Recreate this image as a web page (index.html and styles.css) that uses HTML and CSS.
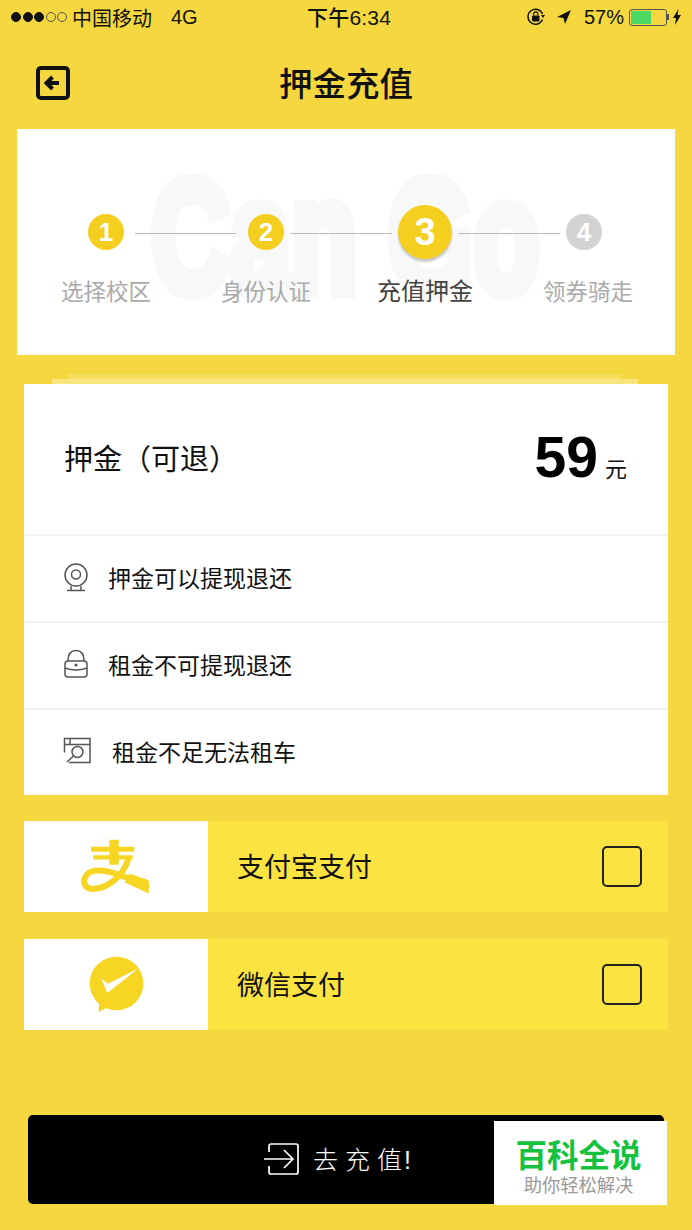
FILE: index.html
```html
<!DOCTYPE html>
<html lang="zh-CN">
<head>
<meta charset="UTF-8" />
<meta name="viewport" content="width=device-width, initial-scale=1" />
<title>押金充值</title>
<link rel="stylesheet" href="styles.css">
</head>
<body>
  <div class="page">
    <div class="status-bar">
      <div class="status-left">
        <div class="signal">
          <span class="dot"></span><span class="dot"></span><span class="dot"></span>
          <span class="dot off"></span><span class="dot off"></span>
        </div>
        <span class="carrier">中国移动</span>
        <span class="network">4G</span>
      </div>
      <div class="status-time">下午6:34</div>
      <div class="status-right">
        <svg class="ico-lock" viewBox="0 0 20 20" width="20" height="20">
          <path d="M16.5 12.5A7.5 7.5 0 1 1 16.5 7" fill="none" stroke="#111" stroke-width="1.4"/>
          <path d="M15 8h4l-2 3z" fill="#111"/>
          <rect x="6" y="8.5" width="7.5" height="6" rx="1" fill="#111"/>
          <path d="M7.6 8.5V7a2.1 2.1 0 0 1 4.2 0v1.5" fill="none" stroke="#111" stroke-width="1.2"/>
        </svg>
        <svg class="ico-loc" viewBox="0 0 16 16" width="16" height="16">
          <path d="M15 1L1 8l6.5 1L9 15z" fill="#111"/>
        </svg>
        <span class="battery-pct">57%</span>
        <div class="battery"><div class="battery-fill"></div></div>
        <span class="battery-cap"></span>
        <svg class="ico-bolt" viewBox="0 0 8 16" width="8" height="16">
          <path d="M5.5 0L0 9h3l-1 7 6-10H4.6z" fill="#111"/>
        </svg>
      </div>
    </div>

    <div class="nav">
      <svg class="back" viewBox="0 0 34 34" width="34" height="34">
        <rect x="2" y="2" width="30" height="30" rx="3" fill="none" stroke="#111" stroke-width="4"/>
        <path d="M23 17H11M16.500 11L10.500 17l6 6" fill="none" stroke="#111" stroke-width="4"/>
      </svg>
      <h1 class="nav-title">押金充值</h1>
    </div>

    <div class="steps-card">
      <div class="watermark">Can Go</div>
      <div class="steps-track">
        <div class="step-dot">1</div>
        <div class="step-line first"></div>
        <div class="step-dot">2</div>
        <div class="step-line"></div>
        <div class="step-dot active">3</div>
        <div class="step-line"></div>
        <div class="step-dot todo">4</div>
      </div>
      <div class="steps-labels">
        <div class="step-label">选择校区</div>
        <div class="step-label">身份认证</div>
        <div class="step-label current">充值押金</div>
        <div class="step-label">领券骑走</div>
      </div>
    </div>

    <div class="stack-edge outer"></div>
    <div class="stack-edge inner"></div>
    <div class="deposit-card">
      <div class="deposit-head">
        <span class="deposit-name">押金（可退）</span>
        <span class="deposit-amount"><b>59</b><i>元</i></span>
      </div>
      <div class="rule-row">
        <svg class="rule-icon" viewBox="0 0 26 30" width="26" height="30">
          <circle cx="13" cy="13" r="11" fill="none" stroke="#555" stroke-width="1.5"/>
          <circle cx="13" cy="12.5" r="4.5" fill="none" stroke="#555" stroke-width="1.5"/>
          <path d="M8 24v4M18 24v4M4 28.500h18" fill="none" stroke="#555" stroke-width="1.5"/>
        </svg>
        <span>押金可以提现退还</span>
      </div>
      <div class="rule-row">
        <svg class="rule-icon" viewBox="0 0 26 30" width="26" height="30">
          <path d="M5 12C5 5 8 1.500 13 1.500s8 3.500 8 10.500" fill="none" stroke="#555" stroke-width="1.5"/>
          <path d="M2 15a3 3 0 0 1 3-3h16a3 3 0 0 1 3 3v10a3 3 0 0 1-3 3H5a3 3 0 0 1-3-3z" fill="none" stroke="#555" stroke-width="1.500"/>
          <path d="M2 19c7 2.500 15 2.500 22 0" fill="none" stroke="#555" stroke-width="1.5"/>
          <circle cx="13" cy="16" r="1.600" fill="#555"/>
        </svg>
        <span>租金不可提现退还</span>
      </div>
      <div class="rule-row wide">
        <svg class="rule-icon" viewBox="0 0 28 28" width="28" height="28">
          <path d="M6 25.500h21V1.500H1.500v14M1.500 7.500h25M7 1.500v6" fill="none" stroke="#555" stroke-width="1.5"/>
          <circle cx="14.500" cy="15" r="5.500" fill="none" stroke="#555" stroke-width="1.5"/>
          <path d="M10.500 19L4 25" fill="none" stroke="#555" stroke-width="1.5"/>
        </svg>
        <span>租金不足无法租车</span>
      </div>
    </div>

    <div class="pay-row">
      <div class="pay-logo">
        <svg viewBox="185 60 210 170" width="70" height="57">
          <path d="M215 86h130v15H215zM222 111h118v13H222zM270 65h28v75h-28z" fill="#f6d523"/>
          <path d="M328 118C316 165 275 208 225 212C196 214 186 190 202 170C225 142 290 160 388 208" fill="none" stroke="#f6d523" stroke-width="18"/>
          <path d="M330 166L388 186V226L316 192z" fill="#f6d523"/>
        </svg>
      </div>
      <div class="pay-body">
        <span class="pay-name">支付宝支付</span>
        <span class="checkbox"></span>
      </div>
    </div>
    <div class="pay-row">
      <div class="pay-logo">
        <svg viewBox="205 420 170 172" width="57" height="57">
          <circle cx="290" cy="503" r="81" fill="#f6d523"/>
          <path d="M238 565L236 590L268 572z" fill="#f6d523"/>
          <path d="M244 488L264 504L356 458L262 532z" fill="#fff"/>
        </svg>
      </div>
      <div class="pay-body">
        <span class="pay-name">微信支付</span>
        <span class="checkbox"></span>
      </div>
    </div>

    <div class="submit">
      <svg class="submit-icon" viewBox="0 0 36 32" width="36" height="32">
        <path d="M5 9V3a2 2 0 0 1 2-2h25a2 2 0 0 1 2 2v26a2 2 0 0 1-2 2H7a2 2 0 0 1-2-2v-6" fill="none" stroke="#fff" stroke-width="1.7"/>
        <path d="M0 16h28M20 7l9 9-9 9" fill="none" stroke="#fff" stroke-width="1.7"/>
      </svg>
      <span class="submit-text">去充值<span class="bang">!</span></span>
    </div>

    <div class="brand">
      <div class="brand-name">百科全说</div>
      <div class="brand-sub">助你轻松解决</div>
    </div>
  </div>
</body>
</html>
```

FILE: styles.css
```css
* {
  box-sizing: border-box;
}

body {
  margin: 0;
  background: #f5d83f;
  font-family: "Liberation Sans", "Noto Sans CJK SC", sans-serif;
  color: #111;
}

.page {
  position: relative;
  width: 692px;
  height: 1230px;
  overflow: hidden;
}

/* status bar */
.status-bar {
  display: flex;
  align-items: center;
  justify-content: space-between;
  height: 36px;
  padding: 0 11px 2px;
  font-size: 20px;
  position: relative;
}

.status-left,
.status-right {
  display: flex;
  align-items: center;
}

.signal {
  display: flex;
  gap: 1.5px;
  margin-right: 5px;
}

.dot {
  width: 10px;
  height: 10px;
  border-radius: 50%;
  background: #111;
  border: 1px solid #111;
}

.dot.off {
  background: none;
  border-color: #555;
}

.carrier {
  font-size: 20px;
}

.network {
  margin-left: 19px;
  font-size: 20px;
}

.status-time {
  position: absolute;
  left: 307px;
  top: 1px;
  font-size: 21px;
  font-weight: 500;
  letter-spacing: 0.2px;
}

.ico-lock {
  margin-right: 10px;
}

.ico-loc {
  margin-right: 12px;
}

.battery-pct {
  margin-right: 5px;
}

.battery {
  width: 38px;
  height: 17px;
  border: 1px solid #555;
  border-radius: 3px;
  padding: 1px;
}

.battery-fill {
  width: 58%;
  height: 100%;
  background: #4cd964;
}

.battery-cap {
  width: 2px;
  height: 6px;
  margin-right: 4px;
  background: #555;
}

/* nav */
.nav {
  display: flex;
  align-items: center;
  justify-content: center;
  height: 93px;
  padding-bottom: 2px;
  position: relative;
}

.back {
  position: absolute;
  left: 36px;
  top: 30px;
}

.nav-title {
  margin: 0;
  font-size: 33.500px;
  font-weight: 500;
}

/* steps */
.steps-card {
  position: relative;
  height: 226px;
  margin: 0 17px;
  padding-top: 76px;
  background: #fff;
  overflow: hidden;
}

.watermark {
  position: absolute;
  left: 134px;
  top: 26px;
  font-size: 162px;
  line-height: 1;
  font-weight: 700;
  color: #f8f8f8;
  white-space: nowrap;
  -webkit-text-stroke: 13px #f8f8f8;
  transform: scaleX(0.675);
  transform-origin: left top;
}

.steps-track {
  position: relative;
  display: flex;
  align-items: center;
  height: 54px;
  padding-left: 71px;
}

.step-dot {
  flex: none;
  width: 36px;
  height: 36px;
  border-radius: 50%;
  background: #f5cf1f;
  color: #fff;
  font-size: 26px;
  font-weight: 700;
  line-height: 36px;
  text-align: center;
}

.step-dot.active {
  width: 54px;
  height: 54px;
  font-size: 38px;
  line-height: 54px;
  box-shadow: 0 3px 2px #c9c9c9;
}

.step-dot.todo {
  background: #d2d2d2;
}

.step-line {
  flex: none;
  width: 102px;
  height: 1px;
  margin: 2px 6px 0;
  background: #bbb;
}

.step-line.first {
  width: 101px;
  margin: 2px 12px 0 11px;
}

.steps-labels {
  position: relative;
  display: grid;
  grid-template-columns: 160px 160px 158px 168px;
  align-items: center;
  height: 34px;
  margin-top: 13px;
  padding-left: 9px;
}

.step-label {
  font-size: 22.500px;
  text-align: center;
  color: #aaa;
  white-space: nowrap;
}

.step-label.current {
  font-size: 24px;
  color: #444;
}

/* deposit card */
.stack-edge {
  height: 5px;
}

.stack-edge.outer {
  margin: 19px 70px 0 67px;
  background: #f7df5e;
}

.stack-edge.inner {
  margin: 0 54px 0 52px;
  background: #f9e57e;
}

.deposit-card {
  margin: 0 24px;
  background: #fff;
}

.deposit-head {
  display: flex;
  align-items: center;
  justify-content: space-between;
  height: 150px;
  padding: 0 41px 5px;
}

.deposit-name {
  margin-left: -1px;
  font-size: 29px;
}

.deposit-amount {
  display: flex;
  align-items: baseline;
  gap: 7px;
}

.deposit-amount b {
  font-size: 57px;
  color: #000;
}

.deposit-amount i {
  font-size: 22px;
  font-style: normal;
}

.rule-row {
  display: flex;
  align-items: center;
  gap: 19px;
  height: 87px;
  padding: 0 0 3px 39px;
  border-top: 2px solid #f2f2f2;
  font-size: 23px;
}

.rule-row.wide {
  gap: 21px;
}

.rule-icon {
  flex: none;
}

/* payment */
.pay-row {
  display: flex;
  height: 91px;
  margin: 26px 24px 0;
}

.pay-row + .pay-row {
  margin-top: 27px;
}

.pay-logo {
  display: flex;
  align-items: center;
  justify-content: center;
  width: 184px;
  background: #fff;
}

.pay-body {
  flex: 1;
  display: flex;
  align-items: center;
  justify-content: space-between;
  padding: 0 26px 0 29px;
  background: #fbe442;
}

.pay-name {
  margin-bottom: 3px;
  font-size: 27px;
}

.checkbox {
  width: 40px;
  height: 41px;
  border: 2.500px solid #222;
  border-radius: 5px;
}

/* button */
.submit {
  display: flex;
  align-items: center;
  gap: 13px;
  height: 89px;
  margin: 85px 28px 0;
  padding: 0 0 3px 236px;
  background: #000;
  border-radius: 5px;
  color: #fff;
}

.submit-icon {
  margin-top: 2px;
}

.submit-text {
  font-size: 25px;
  font-weight: 300;
  letter-spacing: 7px;
}

.bang {
  margin-left: -5px;
}

/* site stamp lying over the button */
.brand {
  position: absolute;
  left: 494px;
  top: 1121px;
  width: 173px;
  height: 84px;
  padding: 17px 4px 0 0;
  background: #fff;
  text-align: center;
}

.brand-name {
  font-size: 31.500px;
  line-height: 36px;
  font-weight: 700;
  color: #14c23e;
}

.brand-sub {
  font-size: 18.300px;
  line-height: 24px;
  color: #999;
}
```
